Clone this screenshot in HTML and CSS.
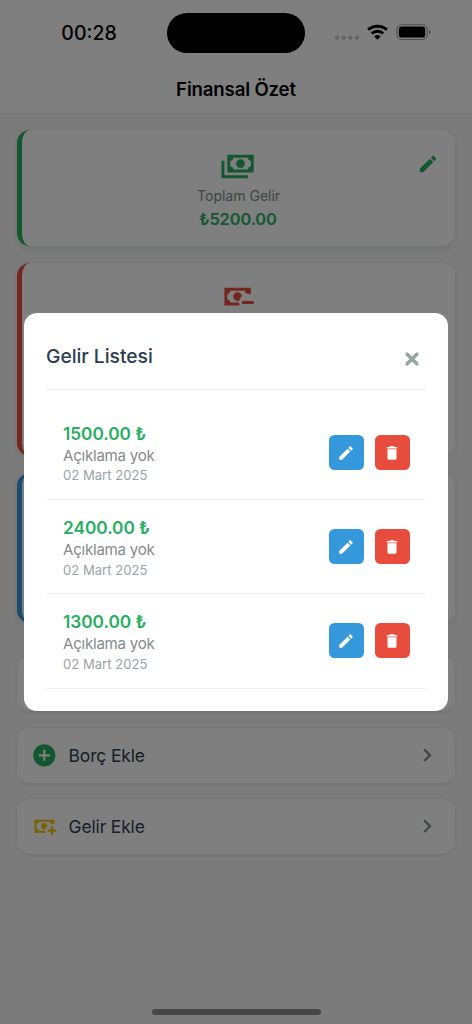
FILE: index.html
```html
<!DOCTYPE html>
<html lang="tr">
<head>
<meta charset="utf-8">
<title>Finansal Özet</title>
<link rel="stylesheet" href="styles.css">
</head>
<body>
<svg class="sprite" width="0" height="0">
  <symbol id="pencil" viewBox="0 0 24 24"><path d="M20.71,7.04C21.1,6.65 21.1,6 20.71,5.63L18.37,3.29C18,2.9 17.35,2.9 16.96,3.29L15.12,5.12L18.87,8.87M3,17.25V21H6.75L17.81,9.93L14.06,6.18L3,17.25Z"/></symbol>
  <symbol id="trash" viewBox="0 0 24 24"><path d="M19,4H15.5L14.5,3H9.5L8.5,4H5V6H19M6,19A2,2 0 0,0 8,21H16A2,2 0 0,0 18,19V7H6V19Z"/></symbol>
  <symbol id="chevron" viewBox="0 0 24 24"><path d="M8.59,16.58L13.17,12L8.59,7.41L10,6L16,12L10,18L8.59,16.58Z"/></symbol>
</svg>
<div class="screen">
  <div class="status">
    <span class="time">00:28</span>
    <span class="island"></span>
    <svg class="indicators" width="100" height="20" viewBox="0 0 100 20">
      <g fill="#000" fill-opacity=".22"><circle cx="5" cy="14.6" r="2.2"/><circle cx="11.7" cy="14.6" r="2.2"/><circle cx="18.4" cy="14.6" r="2.2"/><circle cx="25" cy="14.6" r="2.2"/></g>
      <g fill="none" stroke="#000" stroke-width="3"><path d="M36.1 6.7A14.2 14.2 0 0 1 54.9 6.7"/><path d="M39.7 10.5A8.6 8.6 0 0 1 51.3 10.5"/></g>
      <path d="M45.5 16.8L42.3 13.4A4.8 4.8 0 0 1 48.7 13.4Z"/>
      <rect x="64.9" y="1.7" width="30.4" height="14.8" rx="4.8" fill="none" stroke="#000" stroke-opacity=".4"/>
      <rect x="66.8" y="3.6" width="26.5" height="11" rx="3.2"/>
      <path d="M97 6.7Q98.6 7.5 98.6 9.1Q98.6 10.7 97 11.5Z" fill-opacity=".45"/>
    </svg>
  </div>
  <header class="header"><h1>Finansal Özet</h1></header>
  <main class="content">
    <section class="card income">
      <svg class="card-icon" viewBox="0 0 24 24"><path d="M5,6H23V18H5V6M14,9A3,3 0 0,1 17,12A3,3 0 0,1 14,15A3,3 0 0,1 11,12A3,3 0 0,1 14,9M9,8A2,2 0 0,1 7,10V14A2,2 0 0,1 9,16H19A2,2 0 0,1 21,14V10A2,2 0 0,1 19,8H9M1,10H3V20H19V22H1V10Z"/></svg>
      <span class="card-label">Toplam Gelir</span>
      <strong class="card-value">₺5200.00</strong>
      <svg class="card-edit"><use href="#pencil"/></svg>
    </section>
    <section class="card expense">
      <svg class="card-icon" viewBox="0 0 24 24"><path d="M15 15V17H23V15M14.97 11.61C14.85 10.28 13.59 8.97 12 9C10.3 9.03 9 10.3 9 12C9 13.7 10.3 14.94 12 15C12.38 15 12.77 14.92 13.14 14.77C13.41 13.67 13.86 12.63 14.97 11.61M13 16H7C7 14.9 6.11 14 5 14V10C6.11 10 7 9.11 7 8H17C17 9.11 17.9 10 19 10V10.06C19.67 10.06 20.34 10.18 21 10.4V6H3V18H13.32C13.1 17.33 13 16.66 13 16Z"/></svg>
    </section>
    <section class="card balance"></section>
    <nav class="actions">
      <div class="action"></div>
      <div class="action">
        <svg class="action-icon green" viewBox="0 0 24 24"><path d="M17,13H13V17H11V13H7V11H11V7H13V11H17M12,2A10,10 0 0,0 2,12A10,10 0 0,0 12,22A10,10 0 0,0 22,12A10,10 0 0,0 12,2Z"/></svg>
        <span>Borç Ekle</span>
        <svg class="chevron"><use href="#chevron"/></svg>
      </div>
      <div class="action">
        <svg class="action-icon yellow" viewBox="0 0 24 24"><path d="M15 15V17H18V20H20V17H23V15H20V12H18V15M14.97 11.61C14.85 10.28 13.59 8.97 12 9C10.3 9.03 9 10.3 9 12C9 13.7 10.3 14.94 12 15C12.38 15 12.77 14.92 13.14 14.77C13.41 13.67 13.86 12.63 14.97 11.61M13 16H7C7 14.9 6.11 14 5 14V10C6.11 10 7 9.11 7 8H17C17 9.11 17.9 10 19 10V10.06C19.67 10.06 20.34 10.18 21 10.4V6H3V18H13.32C13.1 17.33 13 16.66 13 16Z"/></svg>
        <span>Gelir Ekle</span>
        <svg class="chevron"><use href="#chevron"/></svg>
      </div>
    </nav>
  </main>
</div>
<div class="overlay">
  <div class="modal">
    <div class="modal-head">
      <h2>Gelir Listesi</h2>
      <svg class="close" viewBox="0 0 16 16"><path d="M3.7 3.7L12.3 12.3M12.3 3.7L3.7 12.3"/></svg>
    </div>
    <ul class="list">
      <li class="item">
        <div class="info"><b class="amount">1500.00 ₺</b><span class="desc">Açıklama yok</span><span class="date">02 Mart 2025</span></div>
        <button class="btn edit"><svg><use href="#pencil"/></svg></button>
        <button class="btn delete"><svg><use href="#trash"/></svg></button>
      </li>
      <li class="item">
        <div class="info"><b class="amount">2400.00 ₺</b><span class="desc">Açıklama yok</span><span class="date">02 Mart 2025</span></div>
        <button class="btn edit"><svg><use href="#pencil"/></svg></button>
        <button class="btn delete"><svg><use href="#trash"/></svg></button>
      </li>
      <li class="item">
        <div class="info"><b class="amount">1300.00 ₺</b><span class="desc">Açıklama yok</span><span class="date">02 Mart 2025</span></div>
        <button class="btn edit"><svg><use href="#pencil"/></svg></button>
        <button class="btn delete"><svg><use href="#trash"/></svg></button>
      </li>
    </ul>
  </div>
  <div class="home-bar"></div>
</div>
</body>
</html>
```

FILE: styles.css
```css
* { box-sizing: border-box; }
body { margin: 0; font-family: Inter, "Liberation Sans", sans-serif; color: #2c3e50; }
h1, h2, ul { margin: 0; padding: 0; }
svg { display: block; flex: none; }
.sprite { position: absolute; }

.screen { height: 1024px; background: #f6f7f7; overflow: hidden; }
.status { height: 66px; background: #fff; display: grid; grid-template-columns: 167px 138px 167px; align-items: center; }
.time { padding-left: 11px; text-align: center; font-size: 19.5px; font-weight: 550; color: #000; }
.island { height: 40px; border-radius: 20px; background: #000; }
.indicators { margin: -1px 0 0 27px; }
.header { height: 48px; padding-bottom: 1px; background: #fff; border-bottom: 1px solid #ebebeb; display: flex; align-items: center; justify-content: center; }
.header h1 { font-size: 18.6px; line-height: 22px; font-weight: 620; letter-spacing: -0.15px; color: #000; }

.content { padding: 16px 17px; display: flex; flex-direction: column; gap: 17px; }
.card { position: relative; height: 116px; padding: 16px 2px 0 0; background: #fff; border-left: 5px solid; border-radius: 13px; box-shadow: 0 2px 9px rgba(0,0,0,.1); display: flex; flex-direction: column; align-items: center; }
.card-icon { width: 35.2px; height: 35.2px; fill: currentColor; }
.income { color: #27ae60; }
.expense { color: #e74c3c; height: 193px; }
.balance { color: #3498db; height: 150px; }
.card-label { margin-top: 5px; padding-left: 2px; font-size: 14.2px; line-height: 20px; letter-spacing: -0.1px; color: #7f8c8d; }
.card-value { margin-top: 3px; padding-left: 1px; font-size: 16.4px; line-height: 20px; font-weight: 580; letter-spacing: -0.1px; }
.card-edit { position: absolute; top: 23px; right: 16px; width: 22px; height: 22px; fill: currentColor; }

.actions { margin-top: 16px; display: flex; flex-direction: column; gap: 16.5px; }
.action { height: 55px; padding: 0 14.5px 0 14px; display: flex; align-items: center; gap: 11px; background: #fff; border-radius: 13px; box-shadow: 0 1px 4px rgba(0,0,0,.1); font-size: 17.4px; letter-spacing: -0.12px; }
.action span { flex: 1; }
.action-icon { width: 26.6px; height: 26.6px; }
.green { fill: #27ae60; }
.yellow { fill: #f1c40f; }
.chevron { width: 26.4px; height: 26.4px; fill: #7f8c8d; }

.overlay { position: fixed; inset: 0; padding: 0 24px; background: rgba(0,0,0,.5); display: flex; align-items: center; }
.modal { flex: 1; height: 398px; padding: 22px; background: #fff; border-radius: 13px; }
.modal-head { height: 55px; padding-bottom: 12px; border-bottom: 1px solid #eee; display: flex; align-items: center; justify-content: space-between; }
.modal-head h2 { font-size: 19.3px; font-weight: 550; letter-spacing: -0.03px; }
.close { width: 18px; height: 18px; margin: 5px 5px 0 0; fill: none; stroke: #95a5a6; stroke-width: 3.2; stroke-linecap: round; }
.list { list-style: none; padding-top: 16px; }
.item { height: 94.2px; padding: 0 16.5px 0 17px; border-bottom: 1px solid #eee; display: flex; align-items: center; gap: 11px; }
.info { flex: 1; padding-top: 2px; display: flex; flex-direction: column; }
.amount { font-size: 17.3px; line-height: 22px; font-weight: 580; color: #27ae60; letter-spacing: -0.05px; }
.desc { font-size: 15.1px; line-height: 22px; letter-spacing: -0.25px; color: #7f8c8d; }
.date { margin-top: -0.5px; font-size: 13.1px; line-height: 18px; color: #95a5a6; }
.btn { width: 35px; height: 35px; padding: 0; border: 0; border-radius: 5.5px; display: grid; place-items: center; }
.btn svg { width: 18px; height: 18px; fill: #fff; }
.edit { background: #3498db; }
.delete { background: #e74c3c; }
.home-bar { position: absolute; left: 151.5px; bottom: 9px; width: 169px; height: 6px; border-radius: 3px; background: #464646; }
```
